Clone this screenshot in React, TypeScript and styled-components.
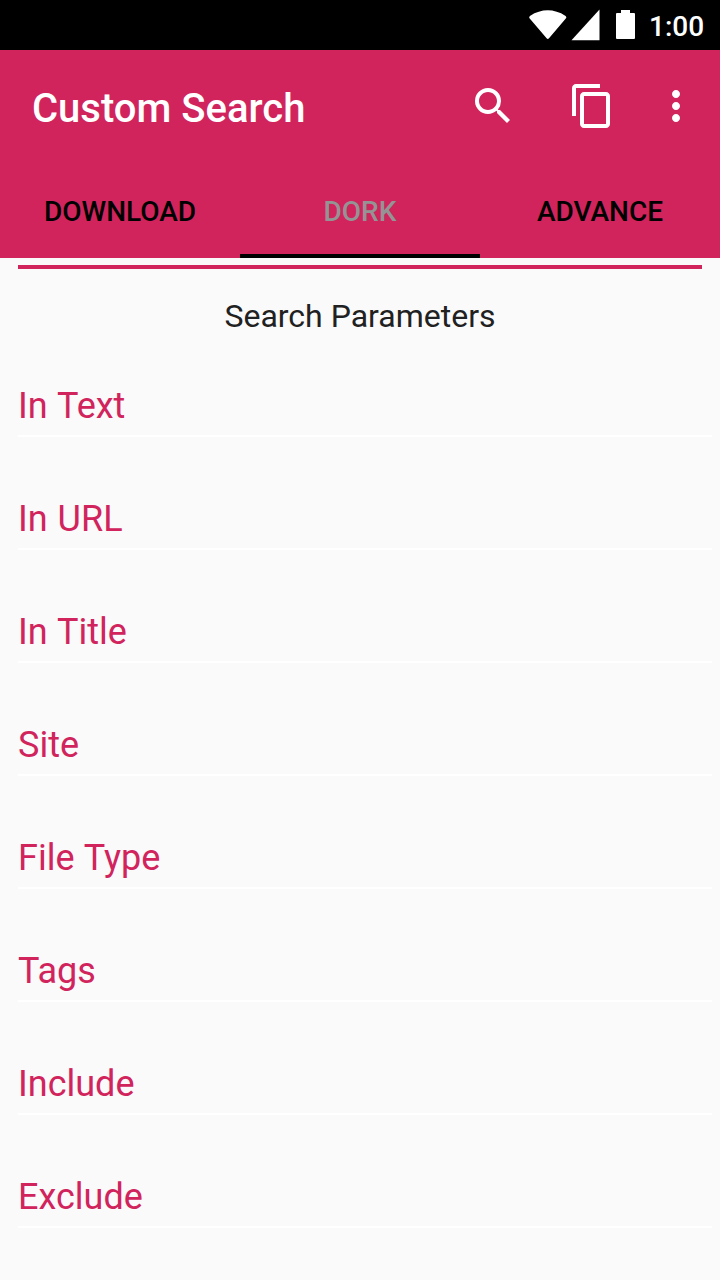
import React from "react";
import styled, { createGlobalStyle } from "styled-components";

const Global = createGlobalStyle`
  * { box-sizing: border-box; }
  body { margin: 0; background: #fafafa; font-family: Roboto, sans-serif; }
`;
const Screen = styled.div`
  width: 720px;
  height: 1280px;
  overflow: hidden;
  background: #fafafa;
`;
const StatusBar = styled.div`
  height: 50px;
  background: #000;
  color: #fff;
  display: flex;
  justify-content: flex-end;
`;
const StatusIcons = styled.svg`
  width: 120px;
  height: 50px;
`;
const Clock = styled.time`
  width: 80px;
  padding-left: 9px;
  padding-top: 2px;
  font-size: 28px;
  font-weight: 500;
  line-height: 50px;
`;
const Header = styled.header`
  height: 208px;
  background: #d1245d;
`;
const Toolbar = styled.div`
  height: 112px;
  padding-left: 32px;
  display: flex;
  align-items: center;
  justify-content: space-between;
`;
const Title = styled.h1`
  margin: 0;
  padding-top: 6px;
  font-size: 40px;
  font-weight: 500;
  line-height: 48px;
  color: #fff;
`;
const Actions = styled.div`
  display: flex;
`;
const Action = styled.button<{ $width: number }>`
  width: ${(p) => p.$width}px;
  height: 96px;
  padding: 0;
  border: 0;
  background: none;
  color: #fff;
  display: flex;
  align-items: center;
  justify-content: center;
  svg { width: 48px; height: 48px; flex: none; fill: currentColor; }
`;
const Tabs = styled.nav`
  height: 96px;
  display: grid;
  grid-template-columns: repeat(3, 1fr);
`;
const Tab = styled.button<{ $active?: boolean }>`
  border: 0;
  border-bottom: 4px solid ${(p) => (p.$active ? "#000" : "transparent")};
  padding: 8px 0 0;
  background: none;
  font: 500 28px/36px Roboto, sans-serif;
  color: ${(p) => (p.$active ? "#949494" : "#000")};
`;
const Form = styled.main`
  padding: 7px 8px 0 18px;
`;
const Rule = styled.div`
  height: 4px;
  margin-right: 10px;
  background: #d1245d;
`;
const Heading = styled.h2`
  margin: 0 10px 0 0;
  height: 55px;
  padding-top: 28px;
  text-align: center;
  font-size: 32px;
  font-weight: 400;
  line-height: 38px;
  color: #212121;
`;
const Field = styled.label`
  height: 113px;
  display: flex;
  align-items: flex-end;
  padding-bottom: 7px;
  border-bottom: 2px solid #fff;
  font-size: 36px;
  line-height: 44px;
  word-spacing: 1px;
  color: #d1245d;
`;

const fields = ["In Text", "In URL", "In Title", "Site", "File Type", "Tags", "Include", "Exclude"];

export default function App() {
  return (
    <Screen>
      <Global />
      <StatusBar>
        <StatusIcons viewBox="520 0 120 50" fill="#fff">
          <path d="M529.500 18.300Q528.600 17 529.900 15.900Q547.700 4.800 565.600 15.900Q567 17 566 18.300L549 38.200Q547.800 39.800 546.600 38.200Z" />
          <path d="M599.500 9.500V40.300H571.500Z" />
          <path d="M617 13H621V10H630V13H634Q635 13 635 14V38Q635 39 634 39H617Q616 39 616 38V14Q616 13 617 13Z" />
        </StatusIcons>
        <Clock>1:00</Clock>
      </StatusBar>
      <Header>
        <Toolbar>
          <Title>Custom Search</Title>
          <Actions>
            <Action $width={118} aria-label="Search">
              <svg viewBox="0 0 24 24"><path d="M15.5 14h-.79l-.28-.27A6.471 6.471 0 0 0 16 9.5 6.5 6.5 0 1 0 9.5 16c1.61 0 3.09-.59 4.23-1.57l.27.28v.79l5 4.99L20.49 19l-4.99-5zm-6 0C7.01 14 5 11.99 5 9.5S7.01 5 9.5 5 14 7.01 14 9.5 11.99 14 9.5 14z" /></svg>
            </Action>
            <Action $width={80} aria-label="Copy">
              <svg viewBox="0 0 24 24"><path d="M16 1H4c-1.100 0-2 .9-2 2v14h2V3h12V1zm3 4H8c-1.100 0-2 .9-2 2v14c0 1.100.9 2 2 2h11c1.100 0 2-.9 2-2V7c0-1.100-.9-2-2-2zm0 16H8V7h11v14z" /></svg>
            </Action>
            <Action $width={88} aria-label="More options">
              <svg viewBox="0 0 24 24"><path d="M12 8c1.100 0 2-.9 2-2s-.9-2-2-2-2 .9-2 2 .9 2 2 2zm0 2c-1.100 0-2 .9-2 2s.9 2 2 2 2-.9 2-2-.9-2-2-2zm0 6c-1.100 0-2 .9-2 2s.9 2 2 2 2-.9 2-2-.9-2-2-2z" /></svg>
            </Action>
          </Actions>
        </Toolbar>
        <Tabs>
          <Tab>DOWNLOAD</Tab>
          <Tab $active>DORK</Tab>
          <Tab>ADVANCE</Tab>
        </Tabs>
      </Header>
      <Form>
        <Rule />
        <Heading>Search Parameters</Heading>
        {fields.map((name) => (
          <Field key={name}>{name}</Field>
        ))}
      </Form>
    </Screen>
  );
}
